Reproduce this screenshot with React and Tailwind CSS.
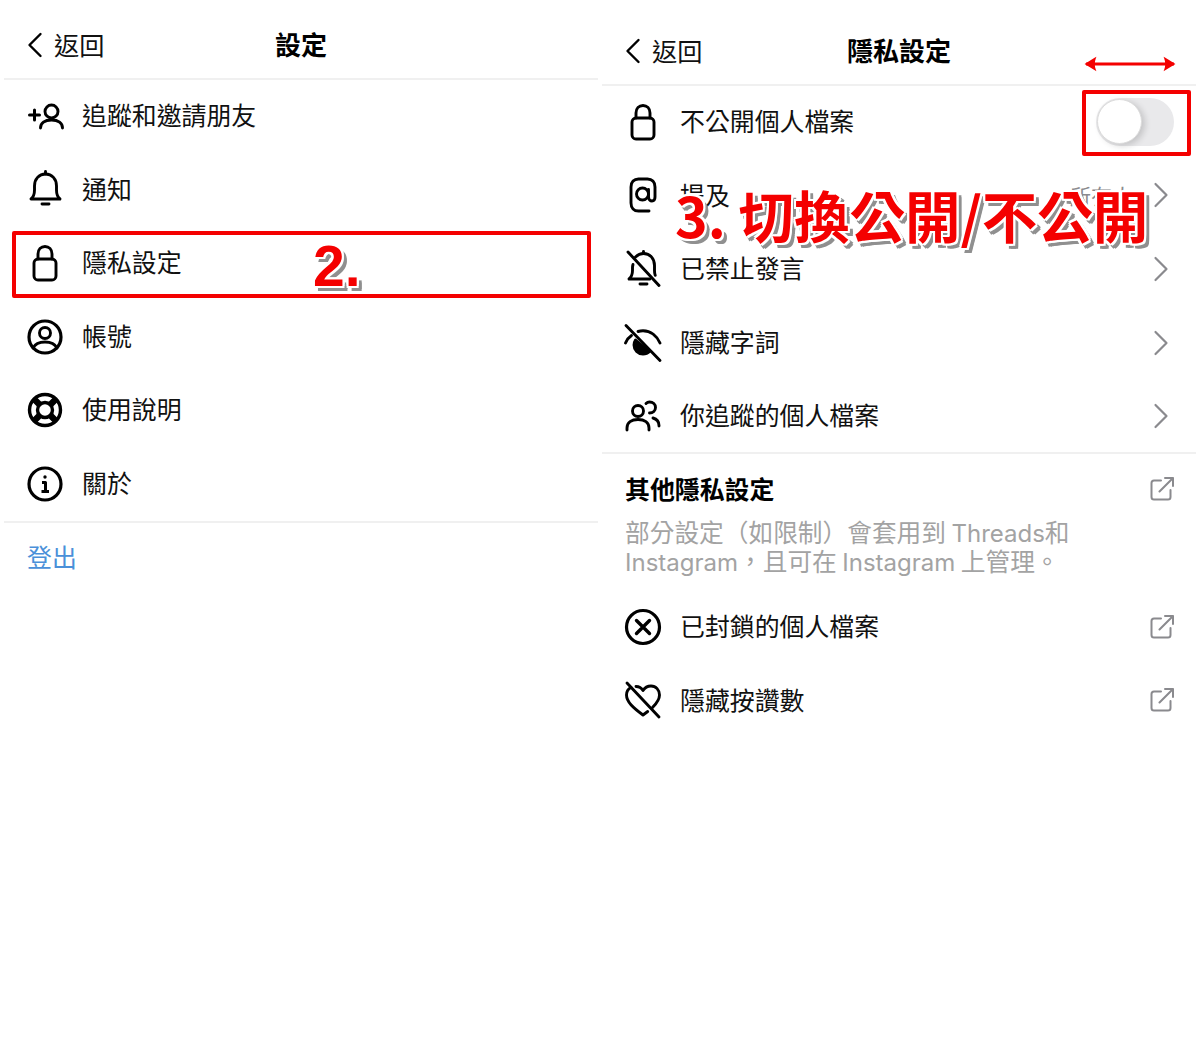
import React from 'react';

const Svg = ({ children, size = 40 }) => (
  <svg width={size} height={size} viewBox="0 0 40 40" fill="none" stroke="#000" strokeWidth="2.900" strokeLinecap="round" strokeLinejoin="round">
    {children}
  </svg>
);

const BellBody = () => (
  <>
    <path d="M6 30c2.500-2 3.500-4.500 3.500-9v-4C9.500 10 14 5 20.500 5S31.500 10 31.500 17v4c0 4.500 1 7 3.500 9z" />
    <path d="M20.500 2.500V5" />
    <path d="M17 35h7" />
  </>
);

const icons = {
  addUser: (
    <Svg>
      <circle cx="26.500" cy="15.500" r="6.500" />
      <path d="M15.500 32c0-5 4-8 11-8s11 3 11 8" />
      <path d="M4.500 19h10M9.500 14v10" strokeWidth="3" />
    </Svg>
  ),
  bell: <Svg><BellBody /></Svg>,
  lock: (
    <Svg>
      <rect x="9" y="16" width="22" height="21" rx="4" />
      <path d="M13 16v-5c0-4.500 3-7.500 7-7.500s7 3 7 7.500v5" />
    </Svg>
  ),
  account: (
    <Svg>
      <circle cx="20" cy="20" r="16" strokeWidth="3.200" />
      <circle cx="20" cy="16" r="5.500" />
      <path d="M8 31c2-4 6-6 12-6s10 2 12 6" />
    </Svg>
  ),
  help: (
    <Svg>
      <circle cx="20" cy="20" r="15.500" strokeWidth="3.400" />
      <circle cx="20" cy="20" r="7.500" strokeWidth="3.400" />
      <path d="M9 9l6 6M31 9l-6 6M9 31l6-6M31 31l-6-6" strokeWidth="6.500" strokeLinecap="butt" />
    </Svg>
  ),
  info: (
    <Svg>
      <circle cx="20" cy="20" r="16" strokeWidth="3.200" />
      <circle cx="20" cy="13" r="1.700" fill="#000" stroke="none" />
      <path d="M17 18.500h3.500V27M16.500 27.500h7.500" strokeWidth="3" strokeLinecap="butt" />
    </Svg>
  ),
  at: (
    <Svg>
      <path d="M26 36H15.500C11 36 8 33 8 28V12C8 7 11 4 15.500 4h9C29 4 32 7 32 12v10c0 2.500-1.300 4-3 4s-3.500-1.500-3.500-4v-7.500" />
      <circle cx="19.500" cy="19" r="6" />
    </Svg>
  ),
  muted: (
    <Svg>
      <path d="M10 15.500c-.3 1-.5 2-.5 3v3c0 4-1 6.500-3.500 8.500h21" />
      <path d="M12.500 8c2-2 5-3.500 8-3.500 6.500 0 11 5 11 12v5c0 2 .2 3.500.7 4.800" />
      <path d="M20.500 2.500V4.500M17 35h7" />
      <path d="M5 3l31 33.500" />
    </Svg>
  ),
  eyeOff: (
    <Svg>
      <path d="M8.500 12.500C5.500 14.500 3.500 17.500 2.500 20" />
      <path d="M15 8.500c1.500-.4 3.300-.7 5-.7 8 0 14 5.500 17 12.200" />
      <path d="M12.500 17c-1 1.500-1.500 3.500-1.500 5 0 5 4 9 9 9 3 0 5-1 6.500-2.500z" fill="#000" />
      <path d="M3 2.500l34 35" />
    </Svg>
  ),
  people: (
    <Svg>
      <circle cx="15" cy="15" r="5.500" />
      <path d="M4 34v-2c0-5.500 4.500-8.500 11-8.500s11 3 11 8.500v2" />
      <path d="M23 7.500c1-1 2.300-1.500 3.500-1.500 3.500 0 6 2.500 6 5.500S30 17 26.500 17" />
      <path d="M30 22c3.500 1 6 3.500 6 7.500v.5" />
    </Svg>
  ),
  block: (
    <Svg>
      <circle cx="20" cy="20" r="16.500" strokeWidth="3.200" />
      <path d="M13.500 13.500l13 13M26.500 13.500l-13 13" strokeWidth="3.400" />
    </Svg>
  ),
  heartOff: (
    <Svg>
      <path d="M8 7.500C5 9 3.500 12 3.500 15c0 7 7 13 16.500 20 1.700-1.300 3.200-2.400 4.700-3.500" />
      <path d="M13 6.500c3 0 5.500 1.500 7 4 1.500-2.500 4.500-4.500 8-4.500 5 0 8.500 4 8.500 9 0 4.500-3 8.500-7 12.500" />
      <path d="M4 3l32 34" />
    </Svg>
  ),
};

const Chevron = () => (
  <svg width="16" height="26" viewBox="0 0 16 26" fill="none" stroke="#8a8a8e" strokeWidth="2.200" strokeLinecap="round" strokeLinejoin="round">
    <path d="M2.500 2l11 11-11 11" />
  </svg>
);

const External = () => (
  <svg width="24" height="24" viewBox="0 0 24 24" fill="none" stroke="#8a8a8e" strokeWidth="2" strokeLinecap="round" strokeLinejoin="round">
    <path d="M11 3.500H4A2.500 2.500 0 0 0 1.500 6v14A2.500 2.500 0 0 0 4 22.500h14a2.500 2.500 0 0 0 2.500-2.500v-7" />
    <path d="M23 1L9.500 14.500M15 1h8v8" />
  </svg>
);

const Back = () => (
  <svg className="mt-[2px]" width="16" height="26" viewBox="0 0 16 26" fill="none" stroke="#000" strokeWidth="2.400" strokeLinecap="round" strokeLinejoin="round">
    <path d="M13.500 2l-11 11 11 11" />
  </svg>
);

const Header = ({ title }) => (
  <div className="relative flex items-center justify-center h-[68px] border-b border-[#f0f0f0] shadow-[0_1px_0_#f0f0f0]">
    <div className="absolute left-[23px] top-[17px] flex items-center gap-[11px] text-[25.2px] leading-8 text-[#111]">
      <Back />
      <span>返回</span>
    </div>
    <span className="mb-[2px] text-[26px] font-bold text-black">{title}</span>
  </div>
);

const Row = ({ icon, label, right, flush }) => (
  <div className={`flex items-center h-[73.6px] pl-[21px] ${flush ? 'pr-[22px]' : 'pr-[27px]'}`}>
    <span className="flex justify-center w-10 shrink-0">{icons[icon]}</span>
    <span className="ml-[17px] mb-[2px] text-[24.9px] text-[#111]">{label}</span>
    <span className="ml-auto flex items-center">{right}</span>
  </div>
);

const Toggle = () => (
  <div className="w-[78px] h-[48px] rounded-full bg-[#e9e9eb] mr-[-5px]">
    <div className="w-[45px] h-[45px] mt-[1.500px] ml-px rounded-full bg-white border border-[#dcdcdc] shadow-[3px_2px_6px_rgba(0,0,0,0.16)]" />
  </div>
);

const Label = ({ className, children }) => (
  <div className={`absolute font-bold text-[#f40000] whitespace-nowrap [text-shadow:2px_0_#fff,-2px_0_#fff,0_2px_#fff,0_-2px_#fff,2px_2px_#fff,-2px_-2px_#fff,2px_-2px_#fff,-2px_2px_#fff,4px_4px_0_#909090,5px_3px_0_#909090,3px_5px_0_#909090,5px_5px_0_#909090] ${className}`}>
    {children}
  </div>
);

const leftRows = [
  ['addUser', '追蹤和邀請朋友'],
  ['bell', '通知'],
  ['lock', '隱私設定'],
  ['account', '帳號'],
  ['help', '使用說明'],
  ['info', '關於'],
];

const Latin = ({ children }) => (
  <span className="text-[24px] leading-none [font-family:Inter,sans-serif]">{children}</span>
);

const App = () => {
  return (
    <div className="relative flex gap-1 w-[1200px] h-[1050px] px-1 bg-white [font-family:'Noto_Sans_CJK_TC','Noto_Sans',sans-serif]">
      <section className="relative w-[594px] pt-[11px]">
        <Header title="設定" />
        {leftRows.map(([icon, label]) => (
          <Row key={label} icon={icon} label={label} />
        ))}
        <div className="h-[74px] pl-[23px] pt-[17px] border-t-2 border-[#f0f0f0] text-[24.9px] leading-8 text-[#4a90d9]">登出</div>

        <div className="absolute left-2 top-[231px] w-[579px] h-[67px] border-4 border-[#f40000] rounded-[2px]" />
        <Label className="left-[309px] top-[228px] text-[57px] leading-[76px] [font-family:'Liberation_Sans',sans-serif]">2.</Label>
      </section>

      <section className="relative w-[594px] pt-[17px]">
        <Header title="隱私設定" />
        <Row icon="lock" label="不公開個人檔案" right={<Toggle />} />
        <Row icon="at" label="提及" right={<><span className="mr-[20px] text-[21px] text-[#8a8a8e]">所有人</span><Chevron /></>} />
        <Row icon="muted" label="已禁止發言" right={<Chevron />} />
        <Row icon="eyeOff" label="隱藏字詞" right={<Chevron />} />
        <Row icon="people" label="你追蹤的個人檔案" right={<Chevron />} />

        <div className="mt-[-1px] border-t-2 border-[#f0f0f0] pt-[16px] pl-[23px] pr-[22px]">
          <div className="flex items-center justify-between">
            <h2 className="text-[24.9px] leading-9 font-bold text-black">其他隱私設定</h2>
            <span className="mt-[2px]"><External /></span>
          </div>
          <p className="mt-[11px] text-[24.7px] leading-[29.5px] text-[#a3a3a3]">
            部分設定（如限制）會套用到 <Latin>Threads</Latin>和<br /><Latin>Instagram</Latin>，且可在 <Latin>Instagram</Latin> 上管理。
          </p>
        </div>
        <div className="mt-[14px]">
          <Row flush icon="block" label="已封鎖的個人檔案" right={<External />} />
          <Row flush icon="heartOff" label="隱藏按讚數" right={<External />} />
        </div>

        <div className="absolute left-[480px] top-[90px] w-[109px] h-[66px] border-4 border-[#f40000] rounded-[2px]" />
        <svg className="absolute left-[481px] top-[54px]" width="94" height="20" viewBox="0 0 94 20" fill="#f40000" stroke="#f40000" strokeWidth="3">
          <path d="M3 10h88" />
          <path d="M12 4.500L3 10l9 5.500q-2-5.500 0-11zM82 4.500L91 10l-9 5.500q2-5.500 0-11z" strokeWidth="1.500" />
        </svg>
        <Label className="left-[73px] top-[176px] text-[55.500px] leading-[76px]">3. 切換公開/不公開</Label>
      </section>
    </div>
  );
};

export default App;
